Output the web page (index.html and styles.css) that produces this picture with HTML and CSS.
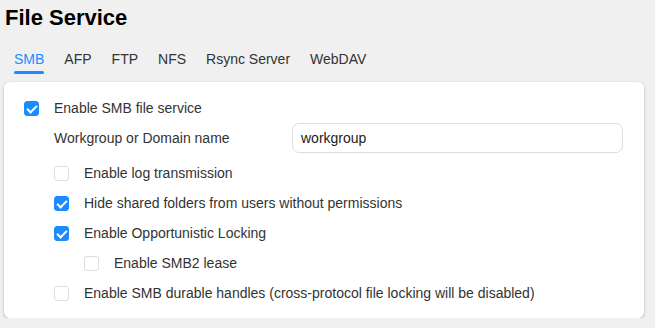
FILE: index.html
```html
<!DOCTYPE html>
<html lang="en">
<head>
    <meta charset="UTF-8">
    <meta name="viewport" content="width=device-width, initial-scale=1.0">
    <title>File Service</title>
    <link rel="stylesheet" href="styles.css">
</head>
<body>
    <h1>File Service</h1>
    <div class="tabs">
        <span class="tab active">SMB</span>
        <span class="tab">AFP</span>
        <span class="tab">FTP</span>
        <span class="tab">NFS</span>
        <span class="tab">Rsync Server</span>
        <span class="tab">WebDAV</span>
    </div>
    <div class="card">
        <label class="row">
            <span class="box checked"></span>
            <span>Enable SMB file service</span>
        </label>
        <div class="row field lvl1">
            <span class="field-label">Workgroup or Domain name</span>
            <input class="text-input" type="text" value="workgroup">
        </div>
        <label class="row lvl1">
            <span class="box"></span>
            <span>Enable log transmission</span>
        </label>
        <label class="row lvl1">
            <span class="box checked"></span>
            <span>Hide shared folders from users without permissions</span>
        </label>
        <label class="row lvl1">
            <span class="box checked"></span>
            <span>Enable Opportunistic Locking</span>
        </label>
        <label class="row lvl2">
            <span class="box"></span>
            <span>Enable SMB2 lease</span>
        </label>
        <label class="row lvl1">
            <span class="box"></span>
            <span>Enable SMB durable handles (cross-protocol file locking will be disabled)</span>
        </label>
    </div>
</body>
</html>
```

FILE: styles.css
```css
body {
    margin: 0;
    padding: 0 11px 0 4px;
    background: #f0f0f0;
    font-family: 'Liberation Sans', Arial, sans-serif;
    font-size: 14px;
    color: #333;
}
h1 {
    margin: 0;
    padding: 5px 0 0 1px;
    height: 30px;
    font-size: 22px;
    font-weight: bold;
    color: #000;
}
.tabs {
    display: flex;
    gap: 20px;
    padding: 16px 0 0 10px;
    height: 31px;
}
.tab {
    position: relative;
    height: 22px;
    color: #333;
}
.tab.active {
    color: #1a8cff;
}
.tab.active::after {
    content: "";
    position: absolute;
    left: 0;
    right: 0;
    bottom: -1px;
    height: 3px;
    border-radius: 2px;
    background: #1a8cff;
}
.card {
    background: #fff;
    border-radius: 6px;
    box-shadow: 0 1px 3px rgba(0, 0, 0, 0.25);
    padding: 11px 21px 10px 20px;
}
.row {
    display: flex;
    align-items: center;
    gap: 15px;
    height: 30px;
}
.lvl1 {
    padding-left: 30px;
}
.lvl2 {
    padding-left: 60px;
}
.field {
    gap: 0;
    margin-bottom: 5px;
}
.field-label {
    width: 238px;
}
.text-input {
    flex: 1;
    box-sizing: border-box;
    height: 30px;
    border: 1px solid #ddd;
    border-radius: 7px;
    padding: 0 8px;
    font-family: inherit;
    font-size: 14px;
    color: #222;
    outline: none;
}
.box {
    width: 15px;
    height: 15px;
    box-sizing: border-box;
    border: 1px solid #ddd;
    border-radius: 3px;
    background: #fff;
    flex-shrink: 0;
    position: relative;
}
.box.checked {
    background: #1a8cff;
    border-color: #1a8cff;
}
.box.checked::after {
    content: "";
    position: absolute;
    left: 4px;
    top: 1px;
    width: 4px;
    height: 8px;
    border: solid #fff;
    border-width: 0 2px 2px 0;
    transform: rotate(45deg);
}
```
